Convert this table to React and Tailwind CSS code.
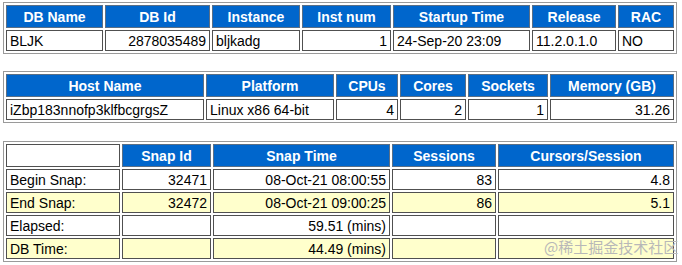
import React from "react";

const TH = "h-[23px] p-0 px-[4px] bg-[#0066CC] text-white font-bold text-center border border-[#5a6f86] whitespace-nowrap";
const TD = "h-[21px] p-0 px-[3px] border border-[#505050] whitespace-nowrap text-black";

function Table({ className = "", children }) {
  return (
    <table
      className={`table-fixed w-[674px] border-separate border-spacing-[2px] border border-[#9a9a9a] text-[14px] leading-[16px] ${className}`}
      style={{ fontFamily: '"Liberation Sans", Arial, sans-serif' }}
    >
      {children}
    </table>
  );
}

export default function App() {
  return (
    <div className="relative w-[682px] h-[265px] bg-white pl-[3px] pt-[2px]" style={{ fontFamily: '"Liberation Sans", Arial, sans-serif' }}>
      <Table>
        <tbody>
          <tr>
            <th className={`${TH} w-[97px]`}>DB Name</th>
            <th className={`${TH} w-[105px]`}>DB Id</th>
            <th className={`${TH} w-[88px]`}>Instance</th>
            <th className={`${TH} w-[89px]`}>Inst num</th>
            <th className={`${TH} w-[137px]`}>Startup Time</th>
            <th className={`${TH} w-[84px]`}>Release</th>
            <th className={`${TH} w-[56px]`}>RAC</th>
          </tr>
          <tr>
            <td className={`${TD} text-left`}>BLJK</td>
            <td className={`${TD} text-right`}>2878035489</td>
            <td className={`${TD} text-left`}>bljkadg</td>
            <td className={`${TD} text-right`}>1</td>
            <td className={`${TD} text-left`}>24-Sep-20 23:09</td>
            <td className={`${TD} text-left`}>11.2.0.1.0</td>
            <td className={`${TD} text-left`}>NO</td>
          </tr>
        </tbody>
      </Table>

      <Table className="mt-[17px]">
        <tbody>
          <tr>
            <th className={`${TH} w-[198px]`}>Host Name</th>
            <th className={`${TH} w-[128px]`}>Platform</th>
            <th className={`${TH} w-[62px]`}>CPUs</th>
            <th className={`${TH} w-[66px]`}>Cores</th>
            <th className={`${TH} w-[80px]`}>Sockets</th>
            <th className={`${TH} w-[124px]`}>Memory (GB)</th>
          </tr>
          <tr>
            <td className={`${TD} text-left`}>iZbp183nnofp3klfbcgrgsZ</td>
            <td className={`${TD} text-left`}>Linux x86 64-bit</td>
            <td className={`${TD} text-right`}>4</td>
            <td className={`${TD} text-right`}>2</td>
            <td className={`${TD} text-right`}>1</td>
            <td className={`${TD} text-right`}>31.26</td>
          </tr>
        </tbody>
      </Table>

      <Table className="mt-[18px]">
        <tbody>
          <tr>
            <td className={`h-[23px] p-0 border border-[#505050] bg-white w-[114px]`}></td>
            <th className={`${TH} w-[89px]`}>Snap Id</th>
            <th className={`${TH} w-[177px]`}>Snap Time</th>
            <th className={`${TH} w-[104px]`}>Sessions</th>
            <th className={`${TH} w-[176px]`}>Cursors/Session</th>
          </tr>
          <tr>
            <td className={`${TD} text-left bg-white`}>Begin Snap:</td>
            <td className={`${TD} text-right bg-white`}>32471</td>
            <td className={`${TD} text-right bg-white`}>08-Oct-21 08:00:55</td>
            <td className={`${TD} text-right bg-white`}>83</td>
            <td className={`${TD} text-right bg-white`}>4.8</td>
          </tr>
          <tr>
            <td className={`${TD} text-left bg-[#FFFFCC]`}>End Snap:</td>
            <td className={`${TD} text-right bg-[#FFFFCC]`}>32472</td>
            <td className={`${TD} text-right bg-[#FFFFCC]`}>08-Oct-21 09:00:25</td>
            <td className={`${TD} text-right bg-[#FFFFCC]`}>86</td>
            <td className={`${TD} text-right bg-[#FFFFCC]`}>5.1</td>
          </tr>
          <tr>
            <td className={`${TD} text-left bg-white`}>Elapsed:</td>
            <td className={`${TD} text-right bg-white`}></td>
            <td className={`${TD} text-right bg-white`}>59.51 (mins)</td>
            <td className={`${TD} text-right bg-white`}></td>
            <td className={`${TD} text-right bg-white`}></td>
          </tr>
          <tr>
            <td className={`${TD} text-left bg-[#FFFFCC]`}>DB Time:</td>
            <td className={`${TD} text-right bg-[#FFFFCC]`}></td>
            <td className={`${TD} text-right bg-[#FFFFCC]`}>44.49 (mins)</td>
            <td className={`${TD} text-right bg-[#FFFFCC]`}></td>
            <td className={`${TD} text-right bg-[#FFFFCC]`}></td>
          </tr>
        </tbody>
      </Table>

      <div
        className="absolute left-[544px] top-[237px] text-[15px] leading-[20px] text-[#b8b8b8] whitespace-nowrap"
        style={{ fontFamily: '"Noto Sans CJK SC", "Liberation Sans", sans-serif' }}
      >
        @稀土掘金技术社区
      </div>
    </div>
  );
}
